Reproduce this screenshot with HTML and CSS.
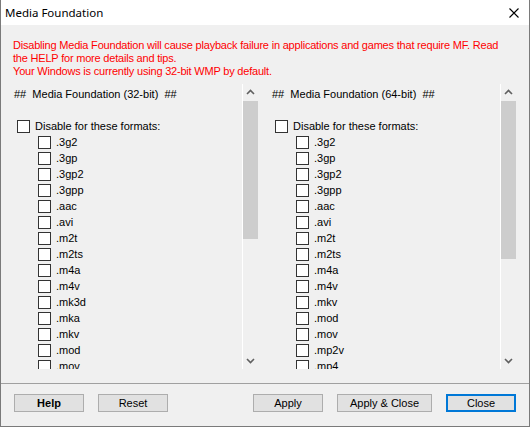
FILE: index.html
```html
<!DOCTYPE html>
<html>
<head>
<meta charset="utf-8">
<link rel="stylesheet" href="styles.css">
</head>
<body>
<div class="window">
  <div class="titlebar">
    <span class="title">Media Foundation</span>
    <svg class="close-x" width="10" height="10" viewBox="0 0 10 10"><path d="M0.5 0.5 L9.5 9.5 M9.5 0.5 L0.5 9.5" stroke="#000" stroke-width="1.1" fill="none"/></svg>
  </div>
  <div class="client">
    <div class="msg">
      <div>Disabling Media Foundation will cause playback failure in applications and games that require MF. Read the HELP for more details and tips.</div>
      <div>Your Windows is currently using 32-bit WMP by default.</div>
    </div>
    <div class="panels">
      <div class="panel">
        <div class="panel-body">
          <div class="header">##&nbsp; Media Foundation (32-bit) &nbsp;##</div>
          <label class="main-row"><span class="cb"></span>Disable for these formats:</label>
          <div class="list">
            <label class="row"><span class="cb"></span>.3g2</label>
            <label class="row"><span class="cb"></span>.3gp</label>
            <label class="row"><span class="cb"></span>.3gp2</label>
            <label class="row"><span class="cb"></span>.3gpp</label>
            <label class="row"><span class="cb"></span>.aac</label>
            <label class="row"><span class="cb"></span>.avi</label>
            <label class="row"><span class="cb"></span>.m2t</label>
            <label class="row"><span class="cb"></span>.m2ts</label>
            <label class="row"><span class="cb"></span>.m4a</label>
            <label class="row"><span class="cb"></span>.m4v</label>
            <label class="row"><span class="cb"></span>.mk3d</label>
            <label class="row"><span class="cb"></span>.mka</label>
            <label class="row"><span class="cb"></span>.mkv</label>
            <label class="row"><span class="cb"></span>.mod</label>
            <label class="row"><span class="cb"></span>.mov</label>
          </div>
        </div>
        <div class="scrollbar">
          <svg class="arrow" width="15" height="17" viewBox="0 0 15 17"><path d="M4 10 L7.5 6.5 L11 10" stroke="#606060" stroke-width="1.6" fill="none"/></svg>
          <div class="track"><div class="thumb thumb-left"></div></div>
          <svg class="arrow" width="15" height="17" viewBox="0 0 15 17"><path d="M4 7 L7.5 10.5 L11 7" stroke="#606060" stroke-width="1.6" fill="none"/></svg>
        </div>
      </div>
      <div class="panel">
        <div class="panel-body">
          <div class="header">##&nbsp; Media Foundation (64-bit) &nbsp;##</div>
          <label class="main-row"><span class="cb"></span>Disable for these formats:</label>
          <div class="list">
            <label class="row"><span class="cb"></span>.3g2</label>
            <label class="row"><span class="cb"></span>.3gp</label>
            <label class="row"><span class="cb"></span>.3gp2</label>
            <label class="row"><span class="cb"></span>.3gpp</label>
            <label class="row"><span class="cb"></span>.aac</label>
            <label class="row"><span class="cb"></span>.avi</label>
            <label class="row"><span class="cb"></span>.m2t</label>
            <label class="row"><span class="cb"></span>.m2ts</label>
            <label class="row"><span class="cb"></span>.m4a</label>
            <label class="row"><span class="cb"></span>.m4v</label>
            <label class="row"><span class="cb"></span>.mkv</label>
            <label class="row"><span class="cb"></span>.mod</label>
            <label class="row"><span class="cb"></span>.mov</label>
            <label class="row"><span class="cb"></span>.mp2v</label>
            <label class="row"><span class="cb"></span>.mp4</label>
          </div>
        </div>
        <div class="scrollbar">
          <svg class="arrow" width="15" height="17" viewBox="0 0 15 17"><path d="M4 10 L7.5 6.5 L11 10" stroke="#606060" stroke-width="1.6" fill="none"/></svg>
          <div class="track"><div class="thumb thumb-right"></div></div>
          <svg class="arrow" width="15" height="17" viewBox="0 0 15 17"><path d="M4 7 L7.5 10.5 L11 7" stroke="#606060" stroke-width="1.6" fill="none"/></svg>
        </div>
      </div>
    </div>
    <div class="separator"></div>
    <div class="buttons">
      <div class="btn-group">
        <button class="btn btn-help">Help</button>
        <button class="btn">Reset</button>
      </div>
      <div class="btn-group">
        <button class="btn">Apply</button>
        <button class="btn btn-wide">Apply &amp; Close</button>
        <button class="btn btn-default">Close</button>
      </div>
    </div>
  </div>
</div>
</body>
</html>
```

FILE: styles.css
```css
* { box-sizing: border-box; }
html, body { margin: 0; padding: 0; }
body {
  width: 530px;
  height: 427px;
  overflow: hidden;
  font-family: "Liberation Sans", Arial, sans-serif;
  font-size: 11px;
  color: #000;
}
.window {
  width: 530px;
  height: 427px;
  border: 1px solid #7a7a7a;
  border-top: none;
  background: #f0f0f0;
  display: flex;
  flex-direction: column;
}
.titlebar {
  height: 25px;
  background: #fff;
  display: flex;
  align-items: center;
  justify-content: space-between;
  padding: 0 10px 0 4px;
}
.title {
  font-family: "Noto Sans", "Open Sans", sans-serif;
  font-size: 11.5px;
}
.close-x { display: block; margin-top: 0; }
.client {
  flex: 1;
  display: flex;
  flex-direction: column;
}
.msg {
  color: #ff0000;
  line-height: 13px;
  padding: 14px 20px 0 12px;
  height: 59px;
  letter-spacing: -0.2px;
}
.panels {
  display: flex;
  gap: 7px;
  padding-left: 7px;
  height: 285px;
}
.panel {
  width: 251px;
  height: 285px;
  display: flex;
  overflow: hidden;
}
.panel-body {
  flex: 1;
  overflow: hidden;
  padding: 3px 0 0 6px;
}
.header {
  height: 14px;
  line-height: 14px;
  white-space: pre;
}
.main-row {
  display: flex;
  align-items: center;
  height: 16px;
  margin-top: 17px;
  padding-left: 3px;
}
.list { padding-left: 24px; }
.row {
  display: flex;
  align-items: center;
  height: 16px;
}
.cb {
  width: 13px;
  height: 13px;
  border: 1px solid #333;
  background: #fff;
  margin-right: 5px;
  flex: none;
}
.scrollbar {
  width: 17px;
  border-left: 1px solid #fff;
  display: flex;
  flex-direction: column;
  background: #f0f0f0;
}
.arrow { display: block; flex: none; }
.track {
  flex: 1;
}
.thumb {
  background: #cdcdcd;
  width: 15px;
}
.thumb-left { height: 138px; }
.thumb-right { height: 158px; }
.separator {
  height: 1px;
  background: #a0a0a0;
  margin-top: 14px;
}
.buttons {
  display: flex;
  justify-content: space-between;
  padding: 10px 13px 0 13px;
}
.btn-group {
  display: flex;
  gap: 14px;
}
.btn {
  width: 70px;
  height: 18px;
  background: #e1e1e1;
  border: 1px solid #adadad;
  font-family: "Liberation Sans", Arial, sans-serif;
  font-size: 11px;
  color: #000;
  padding: 0;
  margin: 0;
  line-height: 16px;
}
.btn-help { font-weight: bold; }
.btn-wide { width: 95px; }
.btn-default { border: 2px solid #0078d7; line-height: 14px; }
```
